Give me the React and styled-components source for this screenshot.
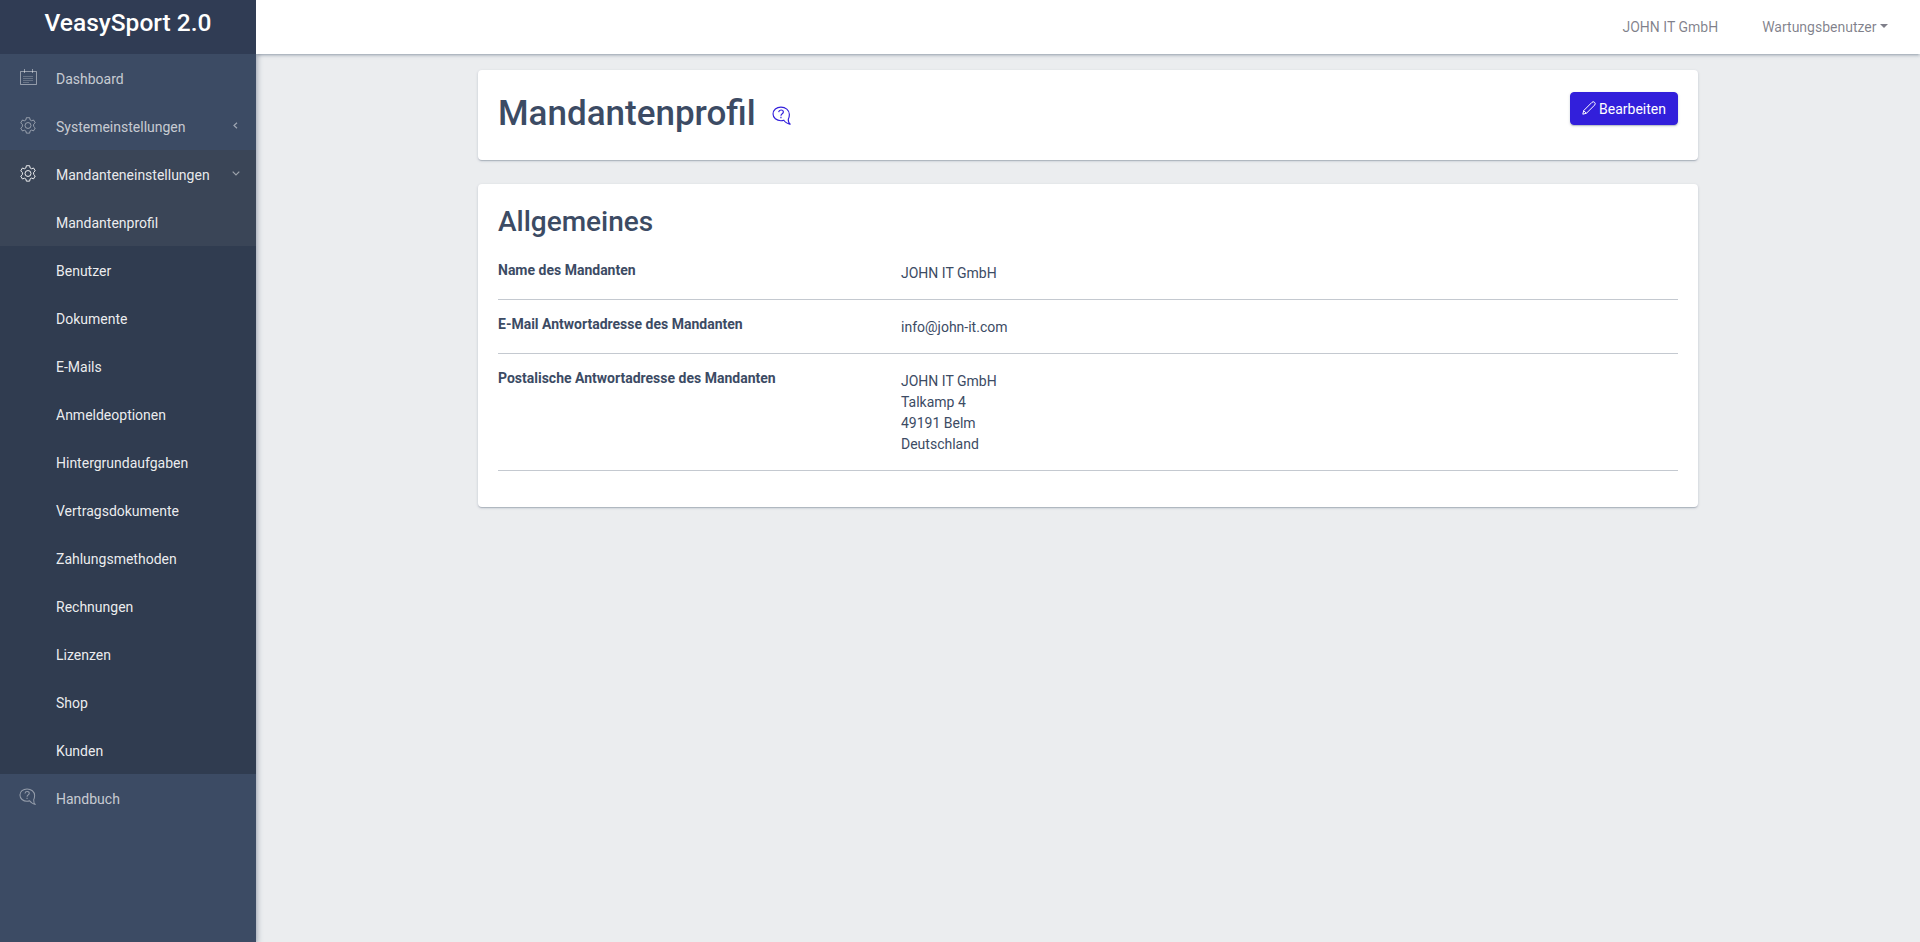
import styled, { createGlobalStyle } from "styled-components";

const menu = ["Benutzer", "Dokumente", "E-Mails", "Anmeldeoptionen", "Hintergrundaufgaben", "Vertragsdokumente", "Zahlungsmethoden", "Rechnungen", "Lizenzen", "Shop", "Kunden"];

const Global = createGlobalStyle`
    html, body { margin: 0; padding: 0; height: 100%; }
    body { font-family: Roboto, "Liberation Sans", sans-serif; font-size: 14px; line-height: 1.5; color: #3c4b64; background: #ebedef; }
    * { box-sizing: border-box; }
`;

function CalendarIcon() {
    return (
        <svg width="17" height="16" viewBox="0 0 17 16" fill="none" stroke="currentColor" strokeWidth="1">
            <path d="M.5 2.500h16v13H.5zM4.500 0v4M12.500 0v4" />
            <path d="M3.500 7.500h10M3.500 9.500h10M3.500 11.500h10M3.500 13.500h6" strokeDasharray="1 1" />
        </svg>
    );
}

function GearIcon() {
    return (
        <svg width="16" height="17" viewBox="1 0 22 24" fill="none" stroke="currentColor" strokeWidth="1.400" strokeLinejoin="round">
            <path d="M9.700 1h4.600l.7 3.200 1.900 1.100 3-1 2.300 4-2.300 2.200v2.800l2.300 2.200-2.300 4-3-1-1.900 1.100-.7 3.200H9.700L9 19.800l-1.900-1.100-3 1-2.300-4 2.300-2.200v-2.800L1.800 8.300l2.300-4 3 1L9 4.200z" />
            <circle cx="12" cy="12" r="4.200" />
        </svg>
    );
}

function HelpIcon({ size = 18 }) {
    return (
        <svg width={size} height={size} viewBox="0 0 19 19" fill="none" stroke="currentColor" strokeWidth="1.100">
            <path d="M8.500 1C4.300 1 1 3.800 1 7.500S4.300 14 8.500 14c1 0 1.900-.2 2.700-.5 1 1.700 3 3 6.300 4-1.400-1-2.200-2.500-2-5 .6-1.200 1-3 1-4.500C16.500 3.800 12.700 1 8.500 1z" />
            <path d="M6.300 5.800C6.500 4.500 7.400 3.800 8.600 3.800c1.300 0 2.200.8 2.200 1.900 0 1.700-2.300 1.600-2.300 3.500M8.500 10.300v1.300" />
        </svg>
    );
}

function PencilIcon() {
    return (
        <svg width="14" height="14" viewBox="0 0 14 14" fill="none" stroke="currentColor" strokeWidth="1">
            <path d="M.8 13.200l.9-3.600L9.900 1.400a1.700 1.700 0 0 1 2.700 2.700L4.400 12.300zM1.700 9.600l2.700 2.700" />
        </svg>
    );
}

export default function App() {
    return (
        <Page>
            <Global />
            <Sidebar>
                <Brand>VeasySport 2.0</Brand>
                <NavItem><IconSlot><CalendarIcon /></IconSlot>Dashboard</NavItem>
                <NavItem>
                    <IconSlot><GearIcon /></IconSlot>Systemeinstellungen
                    <ChevronLeft viewBox="0 0 5 7" fill="none" stroke="currentColor" strokeWidth="1.200"><path d="M4 .7L1 3.500l3 2.800" /></ChevronLeft>
                </NavItem>
                <OpenGroup>
                    <NavItem $open>
                        <IconSlot $open><GearIcon /></IconSlot>Mandanteneinstellungen
                        <ChevronDown viewBox="0 0 8 5" fill="none" stroke="currentColor" strokeWidth="1.200"><path d="M.7 .7L4 4l3.300-3.300" /></ChevronDown>
                    </NavItem>
                    <SubItem $active>Mandantenprofil</SubItem>
                    {menu.map(label => <SubItem key={label}>{label}</SubItem>)}
                </OpenGroup>
                <NavItem><IconSlot><HelpIcon /></IconSlot>Handbuch</NavItem>
            </Sidebar>
            <Main>
                <Header>
                    <HeaderLink>JOHN IT GmbH</HeaderLink>
                    <HeaderLink $caret>Wartungsbenutzer</HeaderLink>
                </Header>
                <Content>
                    <Card $top>
                        <TitleGroup>
                            <Title>Mandantenprofil</Title>
                            <TitleHelp><HelpIcon size={20} /></TitleHelp>
                        </TitleGroup>
                        <EditButton><PencilIcon /><span>Bearbeiten</span></EditButton>
                    </Card>
                    <Card>
                        <Section>Allgemeines</Section>
                        <Row>
                            <Label>Name des Mandanten</Label>
                            <Value>JOHN IT GmbH</Value>
                        </Row>
                        <Row>
                            <Label>E-Mail Antwortadresse des Mandanten</Label>
                            <Value>info@john-it.com</Value>
                        </Row>
                        <Row>
                            <Label>Postalische Antwortadresse des Mandanten</Label>
                            <Value>JOHN IT GmbH<br />Talkamp 4<br />49191 Belm<br />Deutschland</Value>
                        </Row>
                    </Card>
                </Content>
            </Main>
        </Page>
    );
}

const Page = styled.div`
    display: flex;
    height: 942px;
    overflow: hidden;
`;

const Sidebar = styled.aside`
    position: relative;
    z-index: 2;
    width: 256px;
    flex: none;
    background: #3c4b64;
    color: rgba(255, 255, 255, 0.8);
    box-shadow: 0 2px 2px 0 rgba(60, 75, 100, 0.14), 0 3px 1px -2px rgba(60, 75, 100, 0.12), 2px 1px 5px 0 rgba(60, 75, 100, 0.35);
`;

const Brand = styled.div`
    height: 54px;
    padding-top: 5px;
    background: #303c54;
    color: #fff;
    font-size: 24.5px;
    font-weight: 500;
    line-height: 36px;
    text-align: center;
`;

const NavItem = styled.div`
    display: flex;
    align-items: center;
    height: 48px;
    padding: 2px 16px 0 0;
    color: ${props => props.$open ? "rgba(255, 255, 255, 0.9)" : "rgba(255, 255, 255, 0.72)"};
    ${props => props.$open && "background: #3a4557;"}
`;

const IconSlot = styled.span`
    display: flex;
    justify-content: center;
    width: 56px;
    margin-top: -4px;
    color: ${props => props.$open ? "rgba(255, 255, 255, 0.9)" : "rgba(255, 255, 255, 0.45)"};
`;

const ChevronLeft = styled.svg`
    width: 5px;
    height: 7px;
    margin-left: auto;
    margin-top: -4px;
    margin-right: 2px;
    color: rgba(255, 255, 255, 0.5);
`;

const ChevronDown = styled.svg`
    width: 8px;
    height: 5px;
    margin-left: auto;
    margin-top: -4px;
    color: rgba(255, 255, 255, 0.5);
`;

const OpenGroup = styled.div`
    background: #303c50;
`;

const SubItem = styled.div`
    display: flex;
    align-items: center;
    height: 48px;
    padding: 2px 0 0 56px;
    color: rgba(255, 255, 255, 0.92);
    ${props => props.$active && "background: #3a4557;"}
`;

const Main = styled.div`
    flex: 1;
    min-width: 0;
`;

const Header = styled.header`
    position: relative;
    z-index: 3;
    display: flex;
    justify-content: flex-end;
    align-items: center;
    gap: 44px;
    height: 54px;
    padding-right: 32px;
    background: #fff;
    box-shadow: 0 2px 2px 0 rgba(60, 75, 100, 0.14), 0 3px 1px -2px rgba(60, 75, 100, 0.12), 0 1px 5px 0 rgba(60, 75, 100, 0.2);
    clip-path: inset(0 0 -10px 0);
`;

const HeaderLink = styled.span`
    color: rgba(0, 0, 21, 0.5);
    ${props => props.$caret && `
        &::after {
            content: "";
            display: inline-block;
            margin-left: 3.5px;
            vertical-align: 3.5px;
            border-top: 4.2px solid;
            border-left: 4.2px solid transparent;
            border-right: 4.2px solid transparent;
        }
    `}
`;

const Content = styled.main`
    width: 1220px;
    margin: 16px 0 0 222px;
    display: flex;
    flex-direction: column;
    gap: 24px;
`;

const Card = styled.section`
    display: ${props => props.$top ? "flex" : "block"};
    justify-content: space-between;
    align-items: flex-start;
    height: ${props => props.$top ? "90px" : "323px"};
    padding: ${props => props.$top ? "22px 20px" : "21px 20px"};
    background: #fff;
    border-radius: 4px;
    box-shadow: 0 1px 1px 0 rgba(60, 75, 100, 0.14), 0 2px 1px -1px rgba(60, 75, 100, 0.12), 0 1px 3px 0 rgba(60, 75, 100, 0.2);
`;

const TitleGroup = styled.div`
    display: flex;
    align-items: center;
    margin-top: 1px;
`;

const Title = styled.h1`
    margin: 0;
    font-size: 35px;
    font-weight: 500;
    line-height: 42px;
    color: #3c4b64;
`;

const TitleHelp = styled.span`
    display: flex;
    margin: 4px 0 0 16px;
    color: #321fdb;
`;

const EditButton = styled.button`
    display: flex;
    align-items: center;
    gap: 3px;
    height: 33px;
    padding: 0 11px;
    border: 1px solid #321fdb;
    border-radius: 4px;
    background: #321fdb;
    color: #fff;
    font: inherit;
    box-shadow: 0 1px 1px 0 rgba(60, 75, 100, 0.14), 0 2px 1px -1px rgba(60, 75, 100, 0.12), 0 1px 3px 0 rgba(60, 75, 100, 0.2);

    span {
        margin-top: 2px;
    }

    svg {
        margin-top: -1px;
    }
`;

const Section = styled.h2`
    margin: 0 0 7px;
    font-size: 28px;
    font-weight: 500;
    line-height: 34px;
    color: #3c4b64;
`;

const Row = styled.div`
    display: flex;
    padding: 17px 0 15px;
    border-bottom: 1px solid #c4c9d0;
`;

const Label = styled.div`
    width: 403px;
    font-weight: 700;
    margin-top: -3px;
`;

const Value = styled.div`
    flex: 1;
`;
